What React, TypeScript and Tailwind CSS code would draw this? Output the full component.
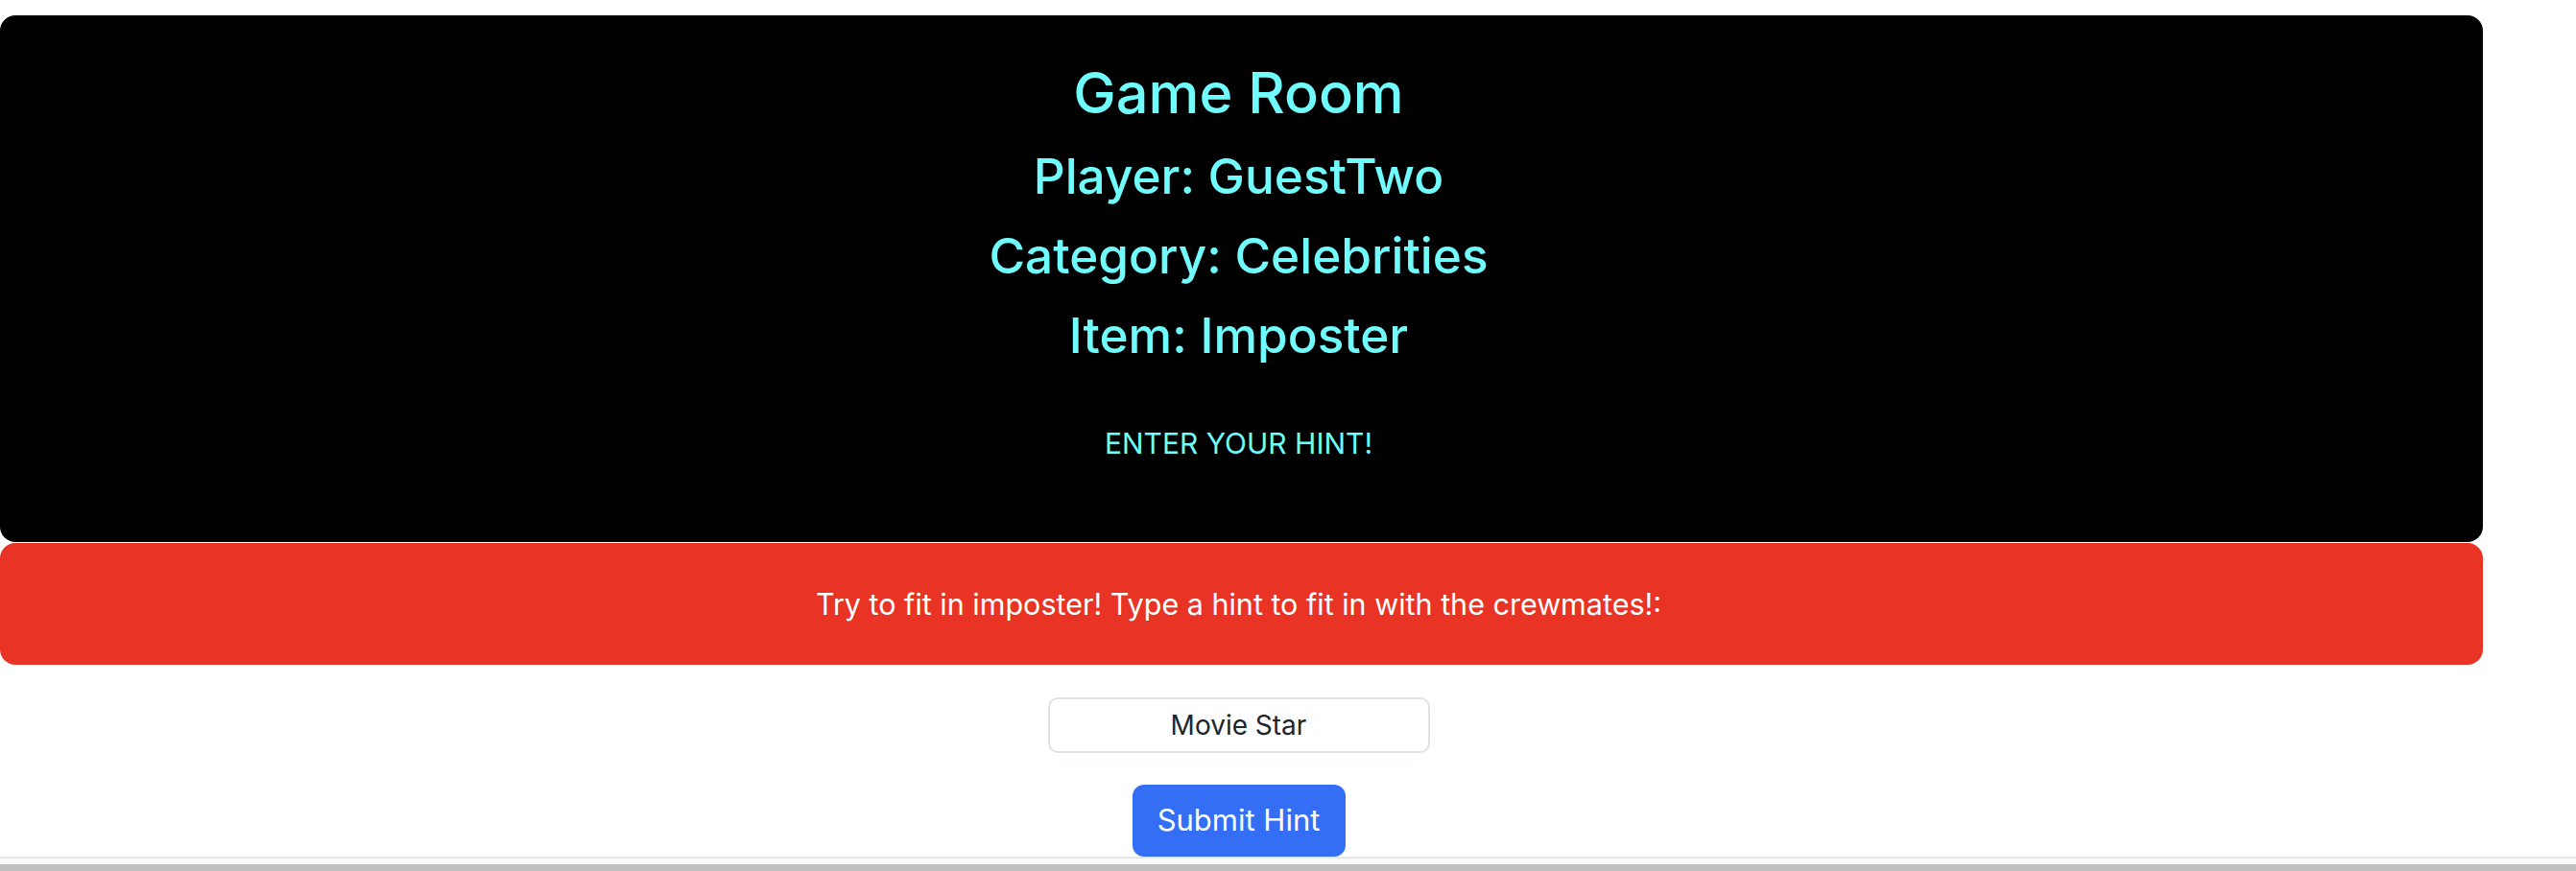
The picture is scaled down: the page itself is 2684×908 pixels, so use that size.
export default function App() {
  return (
    <div className="flex h-[908px] flex-col overflow-hidden bg-white font-['Inter',sans-serif]">
      <main className="h-[893px] w-[2587px] overflow-hidden pt-[16px]">
        {/* GAME INFO */}
        <section className="flex flex-col items-center rounded-[16px] bg-black pt-[38px] pr-[6px] pb-[83px] text-[#70fcfc]">
          <h1 className="h-[88px] text-[59.5px] font-medium leading-[84px]">Game Room</h1>
          <h2 className="h-[83px] text-[51.3px] font-medium leading-[83px]">Player: GuestTwo</h2>
          <h2 className="h-[83px] text-[51.3px] font-medium leading-[83px]">Category: Celebrities</h2>
          <h2 className="h-[83px] text-[51.3px] font-medium leading-[83px]">Item: Imposter</h2>
          <p className="mt-[51px] text-[30px] leading-[40px]">ENTER YOUR HINT!</p>
        </section>

        {/* IMPOSTER MESSAGE */}
        <section className="mt-px h-[127px] rounded-[16px] bg-[#e93324] pt-[41px] pr-[6px] text-center text-[30.5px] leading-[46px] text-white">
          Try to fit in imposter! Type a hint to fit in with the crewmates!:
        </section>

        {/* HINT FORM */}
        <div className="flex flex-col items-center pr-[6px]">
          <input
            defaultValue="Movie Star"
            className="mt-[34px] h-[58px] w-[398px] rounded-[10px] border-2 border-[#dee2e6] bg-white text-center text-[28px] text-[#212529] outline-none"
          />
          <button className="mt-[33px] h-[75px] w-[222px] rounded-[12px] bg-[#346ef4] text-[31px] text-white">
            Submit Hint
          </button>
        </div>
      </main>

      {/* SCROLLBAR STRIP */}
      <div className="h-[15px] border-t-2 border-[#e6e6e6] bg-[#f9f9f9]">
        <div className="mt-[6px] h-[7px] bg-[#c0c0c0]" />
      </div>
    </div>
  );
}
